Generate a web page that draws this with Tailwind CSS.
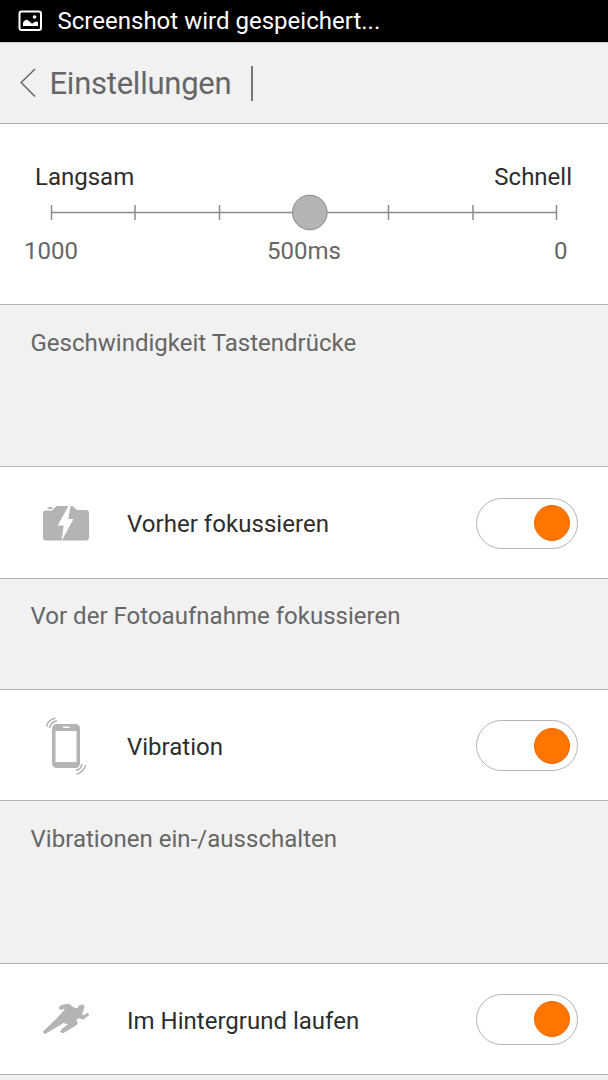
<!DOCTYPE html>
<html lang="de">
<head>
<meta charset="utf-8">
<meta name="viewport" content="width=device-width">
<title>Einstellungen</title>
<script src="https://cdn.jsdelivr.net/npm/@tailwindcss/browser@4"></script>
</head>
<body class="w-[608px] h-[1080px] overflow-hidden flex flex-col bg-[#f1f1f1] font-[Roboto,sans-serif] text-[24px] leading-[30px] text-[#666] whitespace-nowrap">
  <div class="h-[42px] shrink-0 bg-black text-white flex items-center pl-[18px] pb-[1px]">
    <svg class="w-[25px] h-[22px] shrink-0" viewBox="0 0 25 22"><rect x="1.500" y="1.500" width="21.500" height="18.500" rx="2.200" fill="none" stroke="#fff" stroke-width="2"/><path d="M5 16v-3.500q3-5 6.500-1l2.500 2.300 2.500-1.800q2-1 3.500 0v4z" fill="#fff"/><circle cx="16.500" cy="7" r="1.800" fill="#fff"/></svg>
    <span class="ml-[14.500px] tracking-[0.010px]">Screenshot wird gespeichert...</span>
  </div>
  <header class="h-[82px] shrink-0 border-t border-t-[#ccc] border-b border-b-[#aaa] flex items-center">
    <svg class="ml-[20px] w-[17px] h-[30px]" viewBox="0 0 17 30" fill="none" stroke="#666" stroke-width="1.500"><path d="M15 1L1.200 14.500 15 28.500"/></svg>
    <h1 class="ml-[12.500px] pt-[2px] w-[183px] text-[31px] leading-[40px] tracking-[-0.250px]">Einstellungen</h1>
    <i class="ml-[18.500px] w-[2px] h-[35px] bg-[#777]"></i>
  </header>
  <section class="h-[181px] shrink-0 bg-white border-b border-[#b4b4b4] pt-[38px]">
    <div class="flex justify-between pl-[35px] pr-[36px] text-[#2d2d2d]"><span>Langsam</span><span>Schnell</span></div>
    <svg class="block w-[608px] h-[44px]" viewBox="0 1 608 44"><path d="M51 21.500H557" stroke="#8c8c8c" stroke-width="1.500"/><path d="M51.500 14v15M135 14v15M219.500 14v15M388.500 14v15M473 14v15M556.500 14v15" stroke="#8c8c8c" stroke-width="1.500"/><circle cx="309.800" cy="21.500" r="17.300" fill="#b4b4b4" stroke="#888"/></svg>
    <div class="flex pl-[24px]"><span class="w-[243px]">1000</span><span class="w-[287px]">500ms</span><span>0</span></div>
  </section>
  <p class="h-[161px] shrink-0 pl-[30.500px] pt-[23px] tracking-[0.010px]">Geschwindigkeit Tastendrücke</p>
  <section class="h-[113px] shrink-0 bg-white border-y border-[#b4b4b4] flex items-center pl-[42px] pr-[30px] text-[#2d2d2d]">
    <svg class="w-[48px] h-[60px]" viewBox="42 493 48 60"><path d="M45 510.500h7L56.500 506H72.500L77 510h9q3 0 3 3v24.500q0 3-3 3H46q-3 0-3-3V513q0-2.500 2-2.500zM47 509l2-2h3l1 2z" fill="#b4b4b4"/><path d="M69 505L57.700 525.500h6L61.500 541 73.500 519h-5.200L70.700 505z" fill="#fff"/></svg>
    <span class="ml-[37px] pt-[2px] tracking-[0.040px]">Vorher fokussieren</span>
    <span class="ml-auto w-[102px] h-[51px] mt-[1px] rounded-full border border-[#b4b4b4] flex items-center justify-end pr-[7px]"><i class="size-[36px] rounded-full bg-[#ff7500] border border-[#e86800]"></i></span>
  </section>
  <p class="h-[110px] shrink-0 pl-[30.500px] pt-[22px] tracking-[0.020px]">Vor der Fotoaufnahme fokussieren</p>
  <section class="h-[112px] shrink-0 bg-white border-y border-[#b4b4b4] flex items-center pl-[42px] pr-[30px] text-[#2d2d2d]">
    <svg class="w-[48px] h-[60px]" viewBox="42 715 48 60"><path fill="#b4b4b4" fill-rule="evenodd" d="M57 724h18q5 0 5 5v34q0 5-5 5H57q-5 0-5-5v-34q0-5 5-5zM55.500 731v31H76.500v-31zM63 726.500v1.500h6.500v-1.500z"/><g fill="none" stroke="#b4b4b4" stroke-width="1.500"><path d="M46.500 727q1-7 9-9M49.500 728q1-5.500 7.500-7.500M76 770.500q5-1 6-6.500M76.500 774q7-1.500 9-9"/></g></svg>
    <span class="ml-[37px] pt-[3px]">Vibration</span>
    <span class="ml-auto w-[102px] h-[51px] mt-[1px] rounded-full border border-[#b4b4b4] flex items-center justify-end pr-[7px]"><i class="size-[36px] rounded-full bg-[#ff7500] border border-[#e86800]"></i></span>
  </section>
  <p class="h-[162px] shrink-0 pl-[30.500px] pt-[23px] tracking-[0.030px]">Vibrationen ein-/ausschalten</p>
  <section class="h-[112px] shrink-0 bg-white border-y border-[#b4b4b4] flex items-center pl-[42px] pr-[30px] text-[#2d2d2d]">
    <svg class="w-[48px] h-[60px]" viewBox="42 989 48 60"><path fill="#b4b4b4" stroke="#b4b4b4" stroke-width="1" stroke-linejoin="round" d="M59 1008L61 1005.500 69 1004.300 72.700 1007.300 77.300 1009.300 79 1006 83 1004.800 84 1007 82.700 1011.500 81.300 1014 83.300 1015.700 88 1013.300 88.800 1014.800 83.300 1019.200 79 1017.500 75.500 1019.800 77.300 1022.500 76.300 1024.800 63 1032.800 60.500 1031.500 62 1029.300 69 1024 63.500 1022.500 60 1024.700 45 1033.500 43 1032 57.300 1018.300 66 1008.500 60 1009.300z"/></svg>
    <span class="ml-[37px] pt-[3px] tracking-[0.010px]">Im Hintergrund laufen</span>
    <span class="ml-auto w-[102px] h-[51px] rounded-full border border-[#b4b4b4] flex items-center justify-end pr-[7px]"><i class="size-[36px] rounded-full bg-[#ff7500] border border-[#e86800]"></i></span>
  </section>
</body>
</html>
